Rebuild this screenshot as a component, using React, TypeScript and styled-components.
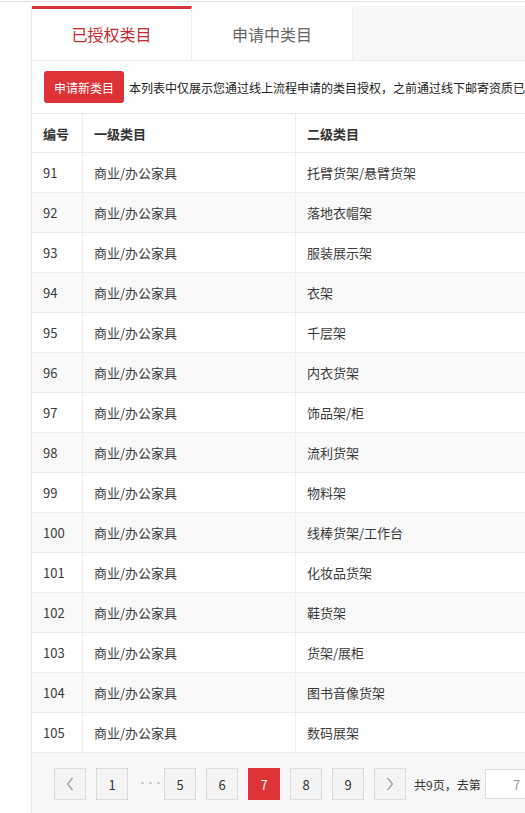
import React from "react";
import styled, { createGlobalStyle } from "styled-components";

const GlobalStyle = createGlobalStyle`
  html, body {
    margin: 0;
    padding: 0;
    background: #fff;
    overflow: hidden;
    font-family: "Noto Sans CJK SC", "Noto Sans", "Liberation Sans", sans-serif;
    color: #333;
  }
`;

const TopRule = styled.div`
  height: 1px;
  margin-top: 1px;
  background: #e2e2e2;
`;

const Page = styled.div`
  padding: 4px 0 0 31px;
`;

const Panel = styled.div`
  width: 920px;
  border-left: 1px solid #e8e8e8;
  background: #fff;
`;

const TabBar = styled.div`
  display: flex;
  height: 54px;
  background: #f7f7f7;
  border-bottom: 1px solid #e8e8e8;
`;

const Tab = styled.div<{ $active?: boolean }>`
  width: ${(p) => (p.$active ? 160 : 161)}px;
  box-sizing: border-box;
  display: flex;
  align-items: center;
  justify-content: center;
  background: #fff;
  border-top: 3px solid ${(p) => (p.$active ? "#d9363b" : "transparent")};
  border-right: 1px solid #ececec;
  font-size: 16px;
  color: ${(p) => (p.$active ? "#c8292e" : "#666")};
  padding-bottom: 2px;
`;

const Toolbar = styled.div`
  display: flex;
  align-items: center;
  gap: 5px;
  height: 52px;
  padding: 0 12px;
  box-sizing: border-box;
  white-space: nowrap;
  overflow: hidden;
`;

const ApplyButton = styled.button`
  flex-shrink: 0;
  height: 32px;
  padding: 0 10px;
  border: none;
  border-radius: 3px;
  background: #dd3337;
  color: #fff;
  font-family: inherit;
  font-size: 12px;
`;

const Notice = styled.span`
  font-size: 12px;
  color: #222;
`;

const Table = styled.div`
  border-top: 1px solid #eaeaea;
`;

const Row = styled.div<{ $head?: boolean; $striped?: boolean }>`
  display: grid;
  grid-template-columns: 51px 213px 1fr;
  height: ${(p) => (p.$head ? 39 : 40)}px;
  box-sizing: border-box;
  border-bottom: 1px solid #ededed;
  background: ${(p) => (p.$striped ? "#f9f9f9" : "#fff")};
  font-size: 13px;
  font-weight: ${(p) => (p.$head ? 700 : 400)};
  color: ${(p) => (p.$head ? "#333" : "#3a3a3a")};
`;

const Cell = styled.div`
  display: flex;
  align-items: center;
  padding-left: 11px;
  border-right: 1px solid #ededed;
  white-space: nowrap;
  &:last-child {
    border-right: none;
  }
`;

const Pager = styled.div`
  display: flex;
  align-items: center;
  gap: 10px;
  height: 61px;
  padding: 1px 0 0 22px;
  box-sizing: border-box;
  background: #f7f7f7;
  white-space: nowrap;
`;

const PageButton = styled.div<{ $current?: boolean }>`
  width: 32px;
  height: 32px;
  box-sizing: border-box;
  display: flex;
  align-items: center;
  justify-content: center;
  border: 1px solid ${(p) => (p.$current ? "#dd3337" : "#dcdcdc")};
  background: ${(p) => (p.$current ? "#dd3337" : "#f4f4f4")};
  color: ${(p) => (p.$current ? "#fff" : "#333")};
  font-size: 13px;
`;

const Ellipsis = styled.span`
  width: 16px;
  padding-bottom: 4px;
  text-align: center;
  white-space: nowrap;
  font-size: 9px;
  letter-spacing: -1px;
  color: #bbb;
`;

const PagerText = styled.span`
  font-size: 12px;
  color: #333;
  margin-left: -2px;
`;

const GotoInput = styled.input`
  width: 64px;
  height: 30px;
  box-sizing: border-box;
  margin-left: -6px;
  border: 1px solid #dcdcdc;
  background: #fff;
  text-align: center;
  font-family: inherit;
  font-size: 13px;
  color: #999;
  outline: none;
`;

const Chevron = ({ dir }: { dir: "left" | "right" }) => (
  <svg width="10" height="14" viewBox="0 0 10 14">
    <polyline
      points={dir === "left" ? "7.5,1 2.5,7 7.5,13" : "2.5,1 7.5,7 2.5,13"}
      fill="none"
      stroke="#999"
      strokeWidth="1.2"
    />
  </svg>
);

const rows: [number, string][] = [
  [91, "托臂货架/悬臂货架"],
  [92, "落地衣帽架"],
  [93, "服装展示架"],
  [94, "衣架"],
  [95, "千层架"],
  [96, "内衣货架"],
  [97, "饰品架/柜"],
  [98, "流利货架"],
  [99, "物料架"],
  [100, "线棒货架/工作台"],
  [101, "化妆品货架"],
  [102, "鞋货架"],
  [103, "货架/展柜"],
  [104, "图书音像货架"],
  [105, "数码展架"],
];

export default function App() {
  return (
    <>
      <GlobalStyle />
      <TopRule />
      <Page>
        <Panel>
          <TabBar>
            <Tab $active>已授权类目</Tab>
            <Tab>申请中类目</Tab>
          </TabBar>

          <Toolbar>
            <ApplyButton>申请新类目</ApplyButton>
            <Notice>
              本列表中仅展示您通过线上流程申请的类目授权，之前通过线下邮寄资质已获得的类目授权不在此列表中展示。
            </Notice>
          </Toolbar>

          <Table>
            <Row $head>
              <Cell>编号</Cell>
              <Cell>一级类目</Cell>
              <Cell>二级类目</Cell>
            </Row>
            {rows.map(([id, name], i) => (
              <Row key={id} $striped={i % 2 === 1}>
                <Cell>{id}</Cell>
                <Cell>商业/办公家具</Cell>
                <Cell>{name}</Cell>
              </Row>
            ))}
          </Table>

          <Pager>
            <PageButton>
              <Chevron dir="left" />
            </PageButton>
            <PageButton>1</PageButton>
            <Ellipsis>···</Ellipsis>
            <PageButton>5</PageButton>
            <PageButton>6</PageButton>
            <PageButton $current>7</PageButton>
            <PageButton>8</PageButton>
            <PageButton>9</PageButton>
            <PageButton>
              <Chevron dir="right" />
            </PageButton>
            <PagerText>共9页，去第</PagerText>
            <GotoInput defaultValue="7" />
          </Pager>
        </Panel>
      </Page>
    </>
  );
}
